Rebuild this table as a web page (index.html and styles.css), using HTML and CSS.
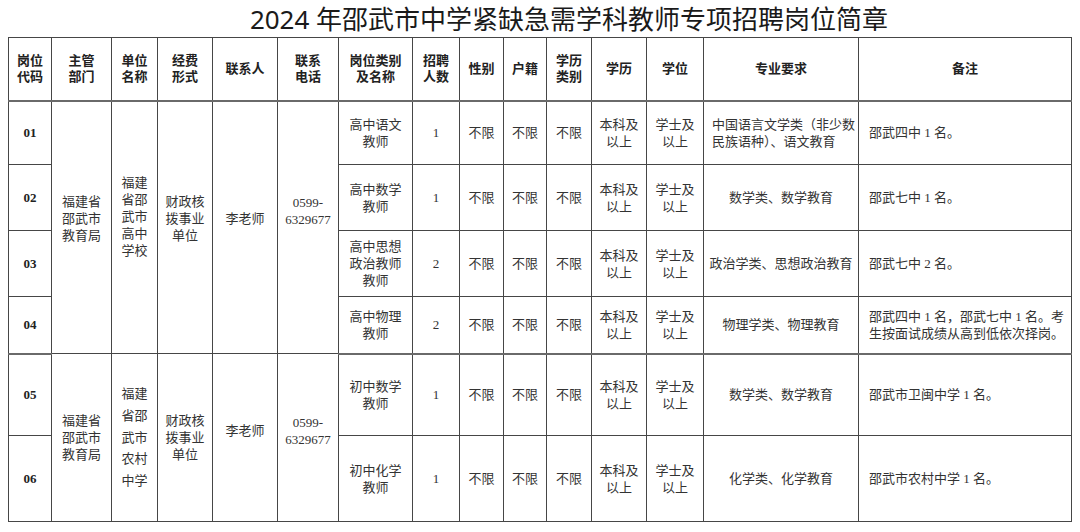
FILE: index.html
```html
<!DOCTYPE html>
<html lang="zh-CN">
<head>
<meta charset="utf-8">
<title>2024年邵武市中学紧缺急需学科教师专项招聘岗位简章</title>
<link rel="stylesheet" href="styles.css">
</head>
<body>
<h1 class="title">2024 年邵武市中学紧缺急需学科教师专项招聘岗位简章</h1>
<table class="grid">
  <colgroup>
    <col class="c1"><col class="c2"><col class="c3"><col class="c4"><col class="c5">
    <col class="c6"><col class="c7"><col class="c8"><col class="c9"><col class="c10">
    <col class="c11"><col class="c12"><col class="c13"><col class="c14"><col class="c15">
  </colgroup>
  <thead>
    <tr class="rh">
      <th>岗位<br>代码</th>
      <th>主管<br>部门</th>
      <th>单位<br>名称</th>
      <th>经费<br>形式</th>
      <th>联系人</th>
      <th>联系<br>电话</th>
      <th>岗位类别<br>及名称</th>
      <th>招聘<br>人数</th>
      <th>性别</th>
      <th>户籍</th>
      <th>学历<br>类别</th>
      <th>学历</th>
      <th>学位</th>
      <th>专业要求</th>
      <th>备注</th>
    </tr>
  </thead>
  <tbody>
    <tr class="r1">
      <td class="code">01</td>
      <td rowspan="4" class="up17">福建省<br>邵武市<br>教育局</td>
      <td rowspan="4" class="up21">福建<br>省邵<br>武市<br>高中<br>学校</td>
      <td rowspan="4" class="up17">财政核<br>拨事业<br>单位</td>
      <td rowspan="4" class="up17">李老师</td>
      <td rowspan="4" class="up33">0599-<br>6329677</td>
      <td>高中语文<br>教师</td>
      <td>1</td>
      <td>不限</td>
      <td>不限</td>
      <td>不限</td>
      <td>本科及<br>以上</td>
      <td>学士及<br>以上</td>
      <td class="major-left">中国语言文学类（非少数<br>民族语种）、语文教育</td>
      <td class="note">邵武四中 1 名。</td>
    </tr>
    <tr class="r2">
      <td class="code">02</td>
      <td>高中数学<br>教师</td>
      <td>1</td>
      <td>不限</td>
      <td>不限</td>
      <td>不限</td>
      <td>本科及<br>以上</td>
      <td>学士及<br>以上</td>
      <td>数学类、数学教育</td>
      <td class="note">邵武七中 1 名。</td>
    </tr>
    <tr class="r3">
      <td class="code">03</td>
      <td>高中思想<br>政治教师<br>教师</td>
      <td>2</td>
      <td>不限</td>
      <td>不限</td>
      <td>不限</td>
      <td>本科及<br>以上</td>
      <td>学士及<br>以上</td>
      <td>政治学类、思想政治教育</td>
      <td class="note">邵武七中 2 名。</td>
    </tr>
    <tr class="r4">
      <td class="code">04</td>
      <td>高中物理<br>教师</td>
      <td>2</td>
      <td>不限</td>
      <td>不限</td>
      <td>不限</td>
      <td>本科及<br>以上</td>
      <td>学士及<br>以上</td>
      <td>物理学类、物理教育</td>
      <td class="note">邵武四中 1 名，邵武七中 1 名。考<br>生按面试成绩从高到低依次择岗。</td>
    </tr>
    <tr class="r5">
      <td class="code">05</td>
      <td rowspan="2">福建省<br>邵武市<br>教育局</td>
      <td rowspan="2" class="tall">福建<br>省邵<br>武市<br>农村<br>中学</td>
      <td rowspan="2">财政核<br>拨事业<br>单位</td>
      <td rowspan="2" class="up14">李老师</td>
      <td rowspan="2" class="up14">0599-<br>6329677</td>
      <td>初中数学<br>教师</td>
      <td>1</td>
      <td>不限</td>
      <td>不限</td>
      <td>不限</td>
      <td>本科及<br>以上</td>
      <td>学士及<br>以上</td>
      <td>数学类、数学教育</td>
      <td class="note">邵武市卫闽中学 1 名。</td>
    </tr>
    <tr class="r6">
      <td class="code">06</td>
      <td>初中化学<br>教师</td>
      <td>1</td>
      <td>不限</td>
      <td>不限</td>
      <td>不限</td>
      <td>本科及<br>以上</td>
      <td>学士及<br>以上</td>
      <td>化学类、化学教育</td>
      <td class="note">邵武市农村中学 1 名。</td>
    </tr>
  </tbody>
</table>
</body>
</html>
```
FILE: styles.css
```css
html, body {
  margin: 0;
  padding: 0;
  background: #ffffff;
}

body {
  font-family: "Liberation Serif", "Noto Sans CJK SC", serif;
  color: #333333;
}

.title {
  margin: 0;
  height: 37px;
  line-height: 38px;
  padding-left: 58px;
  text-align: center;
  font-family: "Noto Sans", "Noto Sans CJK SC", sans-serif;
  font-size: 26px;
  font-weight: 400;
  color: #1a1a1a;
}

.grid {
  margin-left: 8px;
  width: 1063px;
  border-collapse: collapse;
  table-layout: fixed;
  font-size: 13px;
  line-height: 17px;
}

.grid th,
.grid td {
  border: 1px solid #464646;
  padding: 0 2px;
  text-align: center;
  vertical-align: middle;
  font-weight: 400;
}

.grid th {
  font-weight: 700;
  color: #222222;
  line-height: 16px;
  border-bottom: 2px solid #6a6a6a;
}

.c1 { width: 43px; }
.c2 { width: 60px; }
.c3 { width: 46px; }
.c4 { width: 55px; }
.c5 { width: 65px; }
.c6 { width: 61px; }
.c7 { width: 74px; }
.c8 { width: 47px; }
.c9 { width: 44px; }
.c10 { width: 43px; }
.c11 { width: 45px; }
.c12 { width: 55px; }
.c13 { width: 57px; }
.c14 { width: 155px; }
.c15 { width: 213px; }

.rh { height: 63px; }
.r1 { height: 64px; }
.r2 { height: 66px; }
.r3 { height: 66px; }
.r4 { height: 57px; }
.r5 { height: 82px; }
.r6 { height: 86px; }

.grid .r4 td { border-bottom: 2px solid #6a6a6a; }

.grid td.code {
  font-weight: 700;
  color: #222222;
}

.grid td.up14 { padding-bottom: 14px; }
.grid td.up17 { padding-bottom: 17px; }
.grid td.up21 { padding-bottom: 21px; }
.grid td.up33 { padding-bottom: 33px; }

.grid td.tall { line-height: 21.7px; }

.grid td.major-left {
  text-align: left;
  padding-left: 8px;
  padding-right: 0;
}

.grid td.note {
  text-align: left;
  padding-left: 10px;
  padding-right: 2px;
}
```
